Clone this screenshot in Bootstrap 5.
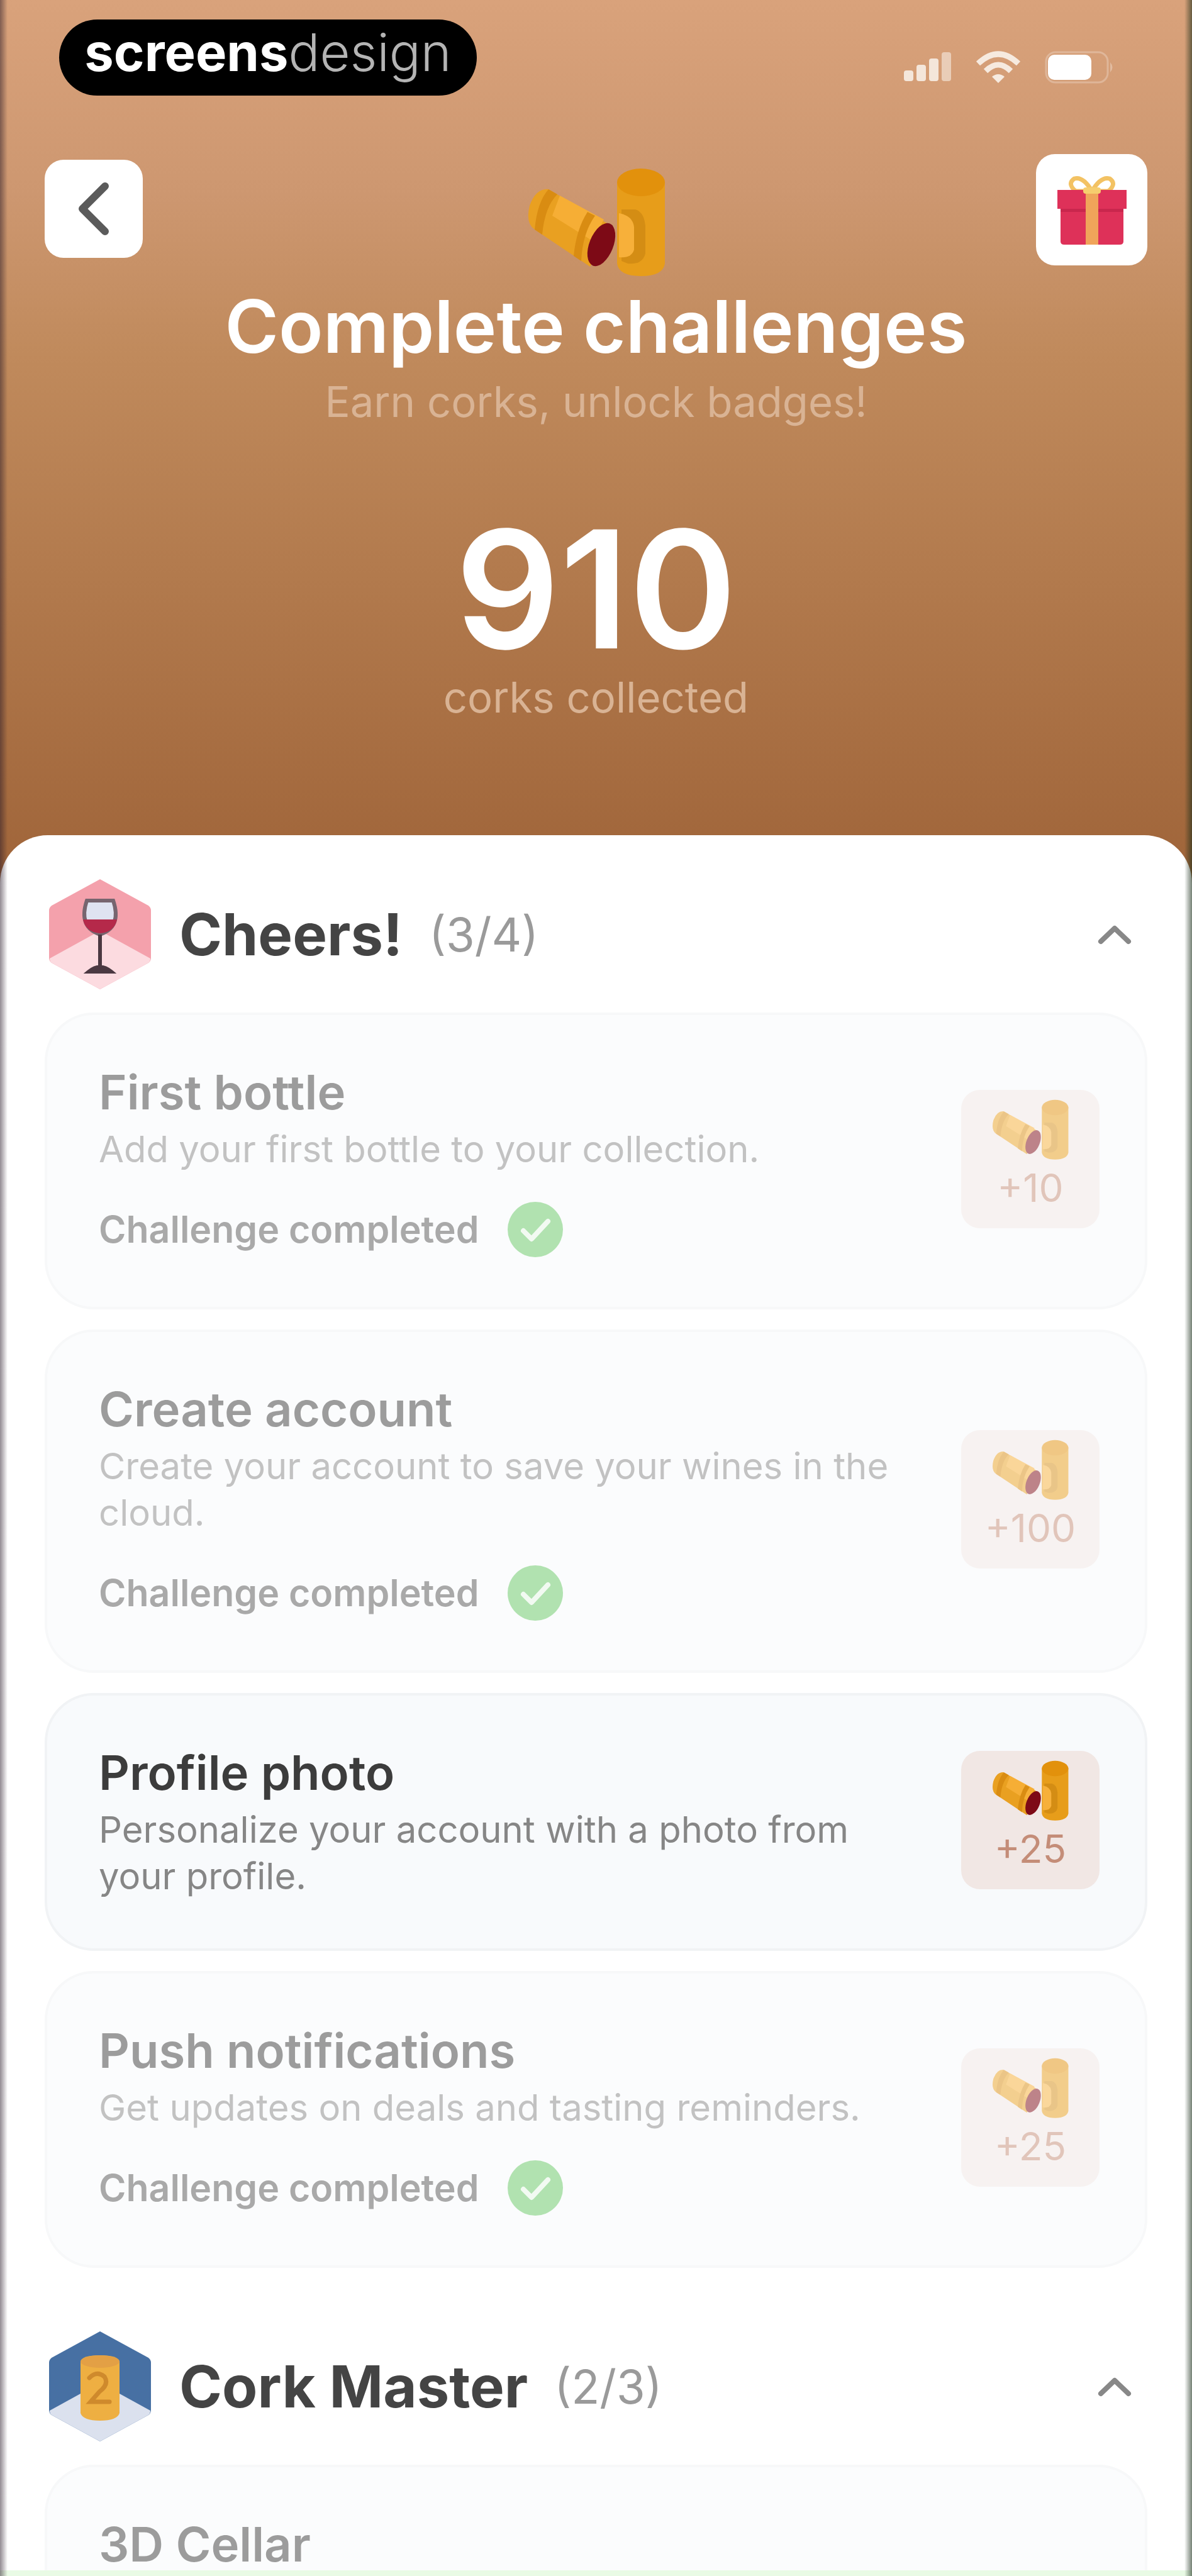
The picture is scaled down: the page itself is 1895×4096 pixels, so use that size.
<!DOCTYPE html>
<html lang="en">
<head>
<meta charset="utf-8">
<meta name="viewport" content="width=device-width, initial-scale=1">
<title>Complete challenges</title>
<link href="https://cdn.jsdelivr.net/npm/bootstrap@5.3.0/dist/css/bootstrap.min.css" rel="stylesheet">
<style>
  body { font-family: Inter, "Open Sans", sans-serif; color: #3c3c3c; background: #fff; }
  .app-shell::after { content: ""; position: absolute; inset: 0; pointer-events: none; z-index: 5;
    background: linear-gradient(90deg, rgba(40,25,40,.5), rgba(40,25,40,0)) left / 12px 100% no-repeat,
      linear-gradient(270deg, rgba(25,45,25,.6), rgba(25,45,25,0)) right / 12px 100% no-repeat; }
  .hero { background: linear-gradient(180deg, #d9a27b 0%, #cd9770 22%, #c08a5c 40%, #b27a4d 65%, #9f6439 100%); padding: 31px 71px 259px; }
  .brand-pill { background: #000; height: 121px; width: 664px; margin-left: 23px; border-radius: 61px; font-size: 83px; line-height: 104px; color: #fff; }
  .brand-pill b { font-weight: 700; }
  .brand-pill span { font-weight: 300; color: #b4b4b4; }
  .status-icons { gap: 38px; margin-right: 51px; padding-top: 50px; }
  .nav-strip { margin-top: 93px; }
  .sq-btn { background: #fff; border: 0; padding: 0; border-radius: 30px; }
  .back-btn { width: 156px; height: 156px; margin-top: 9px; }
  .gift-btn { width: 177px; height: 177px; }
  .cork-hero { width: 220px; height: 172px; margin-top: 22px; }
  .hero h1 { font-size: 116px; line-height: 140px; font-weight: 600; margin: 10px 0 10px; }
  .hero-note { font-size: 67px; line-height: 80px; color: #d9b394; margin: 0; }
  .hero-total { font-size: 260px; line-height: 264px; font-weight: 600; margin: 126px 0 0; }
  .sheet { background: #fff; margin-top: -80px; border-radius: 76px 76px 0 0; padding: 70px 71px 0; }
  .group-head { height: 175px; margin-bottom: 37px; padding: 0 24px 0 7px; }
  .group-head h2 { font-size: 92px; line-height: 110px; font-weight: 700; margin: 0 0 0 45px; color: #444; }
  .group-count { font-size: 74px; line-height: 110px; color: #9a9a9a; margin-left: 42px; }
  .hex { width: 162px; height: 175px; }
  .fold-btn { background: none; border: 0; padding: 0; line-height: 0; }
  .task-list { gap: 32px; margin-bottom: 101px; }
  .task { background: #f8fafc; border: 4px solid #f1f3f5; border-radius: 78px; padding: 72px 72px 78px 82px; }
  .task.done { opacity: .5; }
  .task h3 { font-size: 76px; line-height: 100px; font-weight: 600; margin: 0 0 4px; }
  .task p { font-size: 58px; line-height: 74px; color: #868686; margin: 0; }
  .task-state { font-size: 59px; line-height: 90px; font-weight: 600; color: #555; margin-top: 46px; gap: 44px; }
  .prize { width: 220px; height: 220px; background: #f1e7e4; border-radius: 30px; font-size: 62px; line-height: 90px; color: #c48d78; padding-top: 15px; }
  .prize svg { width: 122px; height: 96px; }
  .home-line { height: 9px; background: #e9fbe5; }
</style>
<script src="https://cdn.jsdelivr.net/npm/bootstrap@5.3.0/dist/js/bootstrap.bundle.min.js"></script>
</head>
<body>
<svg width="0" height="0" class="position-absolute" aria-hidden="true">
  <symbol id="corks" viewBox="0 0 220 172">
    <path d="M34 34Q14 32 4 60Q-3 88 12 98L100 157L134 92Z" fill="#e9a021"/>
    <path d="M52 44L122 82L104 116L40 76Z" fill="#f6ae35"/>
    <path d="M34 34Q16 54 12 98L24 106Q28 62 48 42Z" fill="#d98c12"/>
    <path d="M96 70Q78 98 74 140L86 148Q88 104 108 76Z" fill="#d98c12"/>
    <ellipse cx="118" cy="122" rx="19" ry="36" transform="rotate(22 118 122)" fill="#7d0a16"/>
    <path d="M143 22V152Q146 172 181 172Q216 172 219 152V22Z" fill="#e79d1a"/>
    <ellipse cx="181" cy="23" rx="38" ry="22" fill="#e2910c"/>
    <path d="M150 66H172Q186 70 188 92V136Q184 154 160 152L150 148Z" fill="#d48d14"/>
    <path d="M146 72Q168 76 170 94V130Q166 144 146 142Z" fill="#f7b03a"/>
  </symbol>
  <symbol id="tick" viewBox="0 0 90 90">
    <circle cx="45" cy="45" r="44" fill="#65c764"/>
    <path d="M26 47L39 60L65 32" fill="none" stroke="#e6f7e6" stroke-width="8" stroke-linecap="round" stroke-linejoin="round"/>
  </symbol>
  <symbol id="fold" viewBox="0 0 56 36">
    <path d="M6 29L28 8L50 29" fill="none" stroke="#888" stroke-width="8" stroke-linecap="round" stroke-linejoin="round"/>
  </symbol>
</svg>

<div class="app-shell position-relative vh-100 overflow-hidden">
  <header class="hero text-white text-center">
    <div class="d-flex justify-content-between align-items-start">
      <div class="brand-pill"><b>screens</b><span>design</span></div>
      <div class="status-icons d-flex">
        <svg width="76" height="48" viewBox="0 0 76 48" fill="#f4e6da"><rect y="31" width="15" height="17" rx="4"/><rect x="20" y="22" width="15" height="26" rx="4"/><rect x="40" y="12" width="15" height="36" rx="4"/><rect x="60" y="2" width="15" height="46" rx="4" opacity=".65"/></svg>
        <svg width="72" height="52" viewBox="0 0 72 52" fill="none" stroke="#f6eadf" stroke-width="9"><path d="M4 20Q36-10 68 20M16 32Q36 12 56 32"/><path d="M26 41Q36 33 46 41L36 51Z" fill="#f6eadf" stroke="none"/></svg>
        <svg width="112" height="52" viewBox="0 0 112 52"><rect x="2" y="2" width="98" height="48" rx="15" fill="none" stroke="#fff" stroke-opacity=".25" stroke-width="3"/><rect x="5" y="6" width="69" height="40" rx="10" fill="#fff"/><path d="M104 18Q111 26 104 34Z" fill="#fff" fill-opacity=".3"/></svg>
      </div>
    </div>

    <div class="nav-strip d-flex align-items-start">
      <div class="flex-fill w-50 text-start">
        <button class="sq-btn back-btn d-flex align-items-center justify-content-center" type="button" aria-label="Back">
          <svg width="60" height="88" viewBox="0 0 60 88"><path d="M48 8L12 44L48 80" fill="none" stroke="#5b5b5b" stroke-width="12" stroke-linecap="round" stroke-linejoin="round"/></svg>
        </button>
      </div>
      <svg class="cork-hero flex-shrink-0" aria-hidden="true"><use href="#corks"/></svg>
      <div class="flex-fill w-50 d-flex justify-content-end">
        <button class="sq-btn gift-btn d-flex align-items-center justify-content-center" type="button" aria-label="Rewards">
          <svg width="112" height="112" viewBox="0 0 112 112">
            <path d="M56 26Q42 2 28 6Q16 14 30 26ZM56 26Q70 2 84 6Q96 14 82 26Z" fill="none" stroke="#f3c263" stroke-width="7"/>
            <path d="M1 24H111V54H106V106Q106 111 100 111H12Q6 111 6 106V54H1Z" fill="#de3159"/>
            <path d="M6 54H106V59H6Z" fill="#c9264d"/>
            <rect x="46" y="24" width="20" height="87" fill="#f0a45a"/>
            <rect x="42" y="20" width="28" height="10" rx="4" fill="#f6cd6e"/>
          </svg>
        </button>
      </div>
    </div>

    <h1>Complete challenges</h1>
    <p class="hero-note">Earn corks, unlock badges!</p>
    <p class="hero-total">910</p>
    <p class="hero-note">corks collected</p>
  </header>

  <main class="sheet position-relative">
    <section>
      <div class="group-head d-flex align-items-center">
        <svg class="hex" viewBox="0 0 162 175" aria-hidden="true">
          <path d="M81 0L158 42Q162 45 162 50V125Q162 130 158 133L81 175L4 133Q0 130 0 125V50Q0 45 4 42Z" fill="#f4a1ac"/>
          <path d="M81 82L161 126Q161 131 158 133L81 175L4 133Q1 131 1 126Z" fill="#fcdbe0"/>
          <path d="M60 34H102Q116 76 81 88Q46 76 60 34Z" fill="#dfe3f1" stroke="#77656f" stroke-width="6"/>
          <path d="M54 64H108Q104 84 81 86Q58 84 54 64Z" fill="#b5294a"/>
          <path d="M81 88V142M63 147Q81 132 99 147Z" fill="#4b3841" stroke="#4b3841" stroke-width="6"/>
        </svg>
        <h2>Cheers!</h2><span class="group-count">(3/4)</span>
        <button class="fold-btn ms-auto" type="button" aria-label="Collapse Cheers!"><svg width="56" height="36"><use href="#fold"/></svg></button>
      </div>

      <div class="task-list d-flex flex-column">
        <article class="task done d-flex align-items-center justify-content-between">
          <div>
            <h3>First bottle</h3>
            <p>Add your first bottle to your collection.</p>
            <div class="task-state d-flex align-items-center">Challenge completed <svg width="90" height="90"><use href="#tick"/></svg></div>
          </div>
          <div class="prize text-center d-flex flex-column align-items-center flex-shrink-0"><svg><use href="#corks"/></svg>+10</div>
        </article>

        <article class="task done d-flex align-items-center justify-content-between">
          <div>
            <h3>Create account</h3>
            <p>Create your account to save your wines in the<br>cloud.</p>
            <div class="task-state d-flex align-items-center">Challenge completed <svg width="90" height="90"><use href="#tick"/></svg></div>
          </div>
          <div class="prize text-center d-flex flex-column align-items-center flex-shrink-0"><svg><use href="#corks"/></svg>+100</div>
        </article>

        <article class="task d-flex align-items-center justify-content-between">
          <div>
            <h3>Profile photo</h3>
            <p>Personalize your account with a photo from<br>your profile.</p>
          </div>
          <div class="prize text-center d-flex flex-column align-items-center flex-shrink-0"><svg><use href="#corks"/></svg>+25</div>
        </article>

        <article class="task done d-flex align-items-center justify-content-between">
          <div>
            <h3>Push notifications</h3>
            <p>Get updates on deals and tasting reminders.</p>
            <div class="task-state d-flex align-items-center">Challenge completed <svg width="90" height="90"><use href="#tick"/></svg></div>
          </div>
          <div class="prize text-center d-flex flex-column align-items-center flex-shrink-0"><svg><use href="#corks"/></svg>+25</div>
        </article>
      </div>
    </section>

    <section>
      <div class="group-head d-flex align-items-center">
        <svg class="hex" viewBox="0 0 162 175" aria-hidden="true">
          <path d="M81 0L158 42Q162 45 162 50V125Q162 130 158 133L81 175L4 133Q0 130 0 125V50Q0 45 4 42Z" fill="#4770a3"/>
          <path d="M81 82L161 126Q161 131 158 133L81 175L4 133Q1 131 1 126Z" fill="#dbe1ee"/>
          <path d="M50 48Q52 38 81 38Q110 38 112 48V130Q108 142 81 142Q54 142 50 130Z" fill="#eeaf42"/>
          <ellipse cx="81" cy="48" rx="31" ry="10" fill="#e3a045"/>
          <path d="M64 74Q76 62 88 72Q96 84 80 96L66 112H96" fill="none" stroke="#cf8a2c" stroke-width="7" stroke-linecap="round"/>
        </svg>
        <h2>Cork Master</h2><span class="group-count">(2/3)</span>
        <button class="fold-btn ms-auto" type="button" aria-label="Collapse Cork Master"><svg width="56" height="36"><use href="#fold"/></svg></button>
      </div>
      <div class="task-list d-flex flex-column">
        <article class="task done">
          <h3>3D Cellar</h3>
        </article>
      </div>
    </section>
  </main>
  <div class="home-line position-absolute bottom-0 start-0 end-0"></div>
</div>
</body>
</html>
